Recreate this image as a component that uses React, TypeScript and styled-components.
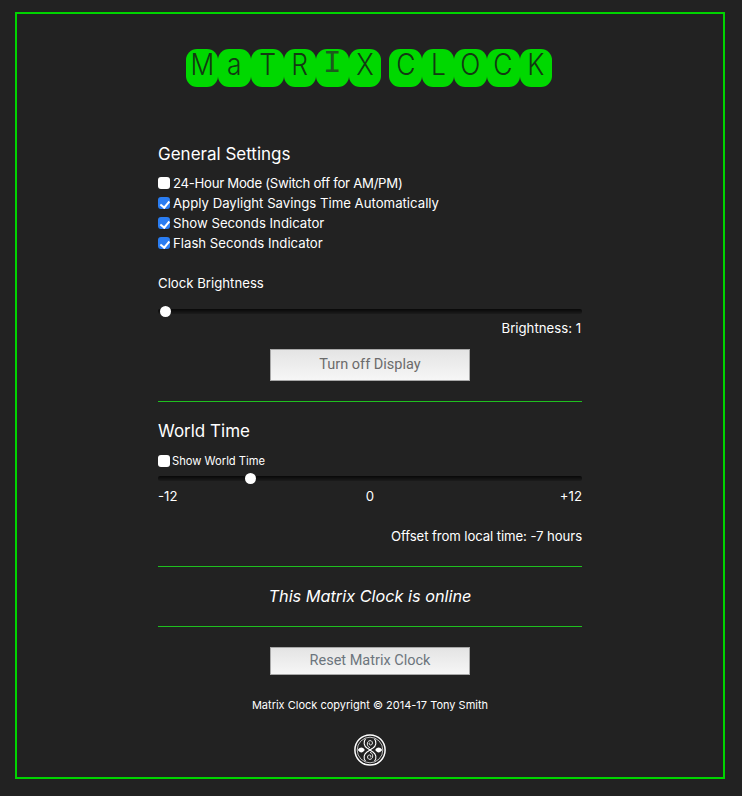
import React from "react";
import styled, { createGlobalStyle } from "styled-components";

const Global = createGlobalStyle`
  html, body { margin: 0; padding: 0; background: #222222; }
  body { font-family: "Inter", "Lato", sans-serif; color: #fff; }
  * { box-sizing: border-box; }
`;

const Frame = styled.div`
  margin: 12px 17px 17px 15px;
  width: 710px;
  height: 767px;
  border: 2px solid #00d400;
  display: flex;
  flex-direction: column;
  align-items: center;
  padding-top: 35px;
`;

const Banner = styled.h1`
  margin: 0 2px 0 0;
  height: 38px;
  display: flex;
  gap: 8px;
  font-weight: 400;
`;

const Word = styled.div`
  display: flex;
`;

const Tile = styled.span`
  flex: none;
  width: 32.6px;
  height: 38px;
  background: #00d800;
  border-radius: 11px;
  display: flex;
  justify-content: center;
`;

const Glyph = styled.span<{ $serif: boolean }>`
  display: block;
  color: ${(p) => (p.$serif ? "#1d5a1d" : "#123a12")};
  font-family: ${(p) => (p.$serif ? '"Liberation Mono", monospace' : '"Inter", sans-serif')};
  font-weight: ${(p) => (p.$serif ? 400 : 300)};
  font-size: ${(p) => (p.$serif ? "31px" : "30px")};
  line-height: 30px;
  transform: scaleX(${(p) => (p.$serif ? 1 : 0.88)});
`;

const Column = styled.main`
  width: 424px;
  margin-top: 55px;
  display: flex;
  flex-direction: column;
`;

const Heading = styled.h2`
  margin: 0;
  font-size: 17px;
  line-height: 24px;
  font-weight: 400;
`;

const Checks = styled.div`
  margin-top: 7px;
  display: flex;
  flex-direction: column;
`;

const CheckRow = styled.label<{ $small?: boolean; $tight?: boolean }>`
  display: flex;
  align-items: center;
  gap: ${(p) => (p.$small ? "2px" : "3px")};
  height: 20px;
  font-size: ${(p) => (p.$small ? "11.2px" : "13.2px")};
  letter-spacing: ${(p) => (p.$tight ? "-0.28px" : "0")};
  margin-top: ${(p) => (p.$small ? "8px" : "0")};
`;

const Box = styled.input.attrs({ type: "checkbox" })`
  appearance: none;
  margin: 0;
  width: 12px;
  height: 12px;
  border-radius: 3px;
  background: #fff;
  position: relative;
  flex: none;
  &:checked {
    background: #2a7df2;
  }
  &:checked::after {
    content: "";
    position: absolute;
    left: 4px;
    top: 1.5px;
    width: 3.5px;
    height: 7px;
    border: solid #fff;
    border-width: 0 2px 2px 0;
    transform: rotate(40deg);
  }
`;

const Label = styled.div`
  margin-top: 20px;
  font-size: 13.2px;
  line-height: 20px;
`;

const Slider = styled.input.attrs({ type: "range" })<{ $top: number }>`
  appearance: none;
  display: block;
  width: 424px;
  height: 11px;
  margin: ${(p) => p.$top}px 0 0;
  background: transparent;
  &::-webkit-slider-runnable-track {
    height: 5px;
    background: linear-gradient(#080808, #1c1c1c);
    border-radius: 2px;
  }
  &::-webkit-slider-thumb {
    appearance: none;
    width: 11px;
    height: 11px;
    margin-top: -3px;
    border-radius: 50%;
    background: #fff;
    border: none;
  }
`;

const RightText = styled.div<{ $top: number }>`
  margin-top: ${(p) => p.$top}px;
  font-size: 13.2px;
  line-height: 20px;
  text-align: right;
`;

const Brightness = styled(RightText)`
  padding-right: 1px;
`;

const Offset = styled(RightText)`
  letter-spacing: -0.1px;
`;

const ActionButton = styled.button<{ $top: number; $height: number; $ink: string }>`
  align-self: center;
  width: 200px;
  height: ${(p) => p.$height}px;
  margin-top: ${(p) => p.$top}px;
  border: 1px solid #a8a8a8;
  background: linear-gradient(#e4e4e4, #f6f6f6);
  color: ${(p) => p.$ink};
  font-family: "Roboto", sans-serif;
  font-size: 14.5px;
  padding: 0 0 2px;
`;

const Rule = styled.hr<{ $top: number }>`
  width: 100%;
  height: 1px;
  border: 0;
  margin: ${(p) => p.$top}px 0 0;
  background: #1fc01f;
`;

const WorldHeading = styled(Heading)`
  margin-top: 17px;
`;

const Scale = styled.div`
  margin-top: 2px;
  display: grid;
  grid-template-columns: 1fr auto 1fr;
  font-size: 13.2px;
  line-height: 20px;
`;

const ScaleEnd = styled.span`
  text-align: right;
`;

const Status = styled.div`
  margin-top: 17px;
  height: 24px;
  font-size: 16.3px;
  line-height: 24px;
  font-style: italic;
  text-align: center;
`;

const Copy = styled.div`
  margin-top: 20px;
  font-size: 11px;
  line-height: 20px;
  text-align: center;
`;

const Seal = styled.svg`
  align-self: center;
  display: block;
  margin-top: 19px;
`;

const letters = (w: string) =>
  w.split("").map((c, i) => (
    <Tile key={i}>
      <Glyph $serif={c === "I"}>{c}</Glyph>
    </Tile>
  ));

export default function App() {
  return (
    <>
      <Global />
      <Frame>
        <Banner>
          <Word>{letters("MaTRIX")}</Word>
          <Word>{letters("CLOCK")}</Word>
        </Banner>
        <Column>
          <Heading>General Settings</Heading>
          <Checks>
            <CheckRow $tight><Box />24-Hour Mode (Switch off for AM/PM)</CheckRow>
            <CheckRow><Box defaultChecked />Apply Daylight Savings Time Automatically</CheckRow>
            <CheckRow><Box defaultChecked />Show Seconds Indicator</CheckRow>
            <CheckRow><Box defaultChecked />Flash Seconds Indicator</CheckRow>
          </Checks>
          <Label>Clock Brightness</Label>
          <Slider $top={13} min={0} max={255} defaultValue={1} />
          <Brightness $top={1}>Brightness: 1</Brightness>
          <ActionButton $top={11} $height={32} $ink="#6b6b6b">Turn off Display</ActionButton>
          <Rule $top={20} />
          <WorldHeading>World Time</WorldHeading>
          <CheckRow $small><Box />Show World Time</CheckRow>
          <Slider $top={2} min={-12.05} max={12} step={0.05} defaultValue={-7} />
          <Scale><span>-12</span><span>0</span><ScaleEnd>+12</ScaleEnd></Scale>
          <Offset $top={20}>Offset from local time: -7 hours</Offset>
          <Rule $top={20} />
          <Status>This Matrix Clock is online</Status>
          <Rule $top={18} />
          <ActionButton $top={20} $height={28} $ink="#6c757d">Reset Matrix Clock</ActionButton>
          <Copy>Matrix Clock copyright © 2014-17 Tony Smith</Copy>
          <Seal width="32" height="32" viewBox="0 0 32 32" fill="none" stroke="#fff">
            <circle cx="16" cy="16" r="15.1" strokeWidth="1.5" />
            <circle cx="16" cy="16" r="12.8" strokeWidth="0.7" />
            <path d="M11.5 4.8 C9 8 10 12 13 14 C15 15 17 17 19 18 C22 20 23 24 20.5 27.2" strokeWidth="1.1" />
            <path d="M20.5 4.8 C23 8 22 12 19 14 C17 15 15 17 13 18 C10 20 9 24 11.5 27.2" strokeWidth="1.1" />
            <path d="M16 13.6 C12.6 13 12.2 7.2 16 6.6 C18.8 6.4 19.4 10.6 16.8 11 C15 11.2 14.6 9 16 8.7" strokeWidth="0.9" />
            <path d="M16 18.4 C19.4 19 19.8 24.8 16 25.4 C13.2 25.6 12.6 21.4 15.2 21 C17 20.8 17.4 23 16 23.3" strokeWidth="0.9" />
            <path d="M3.8 16 C6 13 8.5 12.6 10.8 16 C8.5 19.4 6 19 3.8 16Z M28.2 16 C26 13 23.5 12.6 21.2 16 C23.5 19.4 26 19 28.2 16Z" fill="#fff" stroke="none" />
          </Seal>
        </Column>
      </Frame>
    </>
  );
}
